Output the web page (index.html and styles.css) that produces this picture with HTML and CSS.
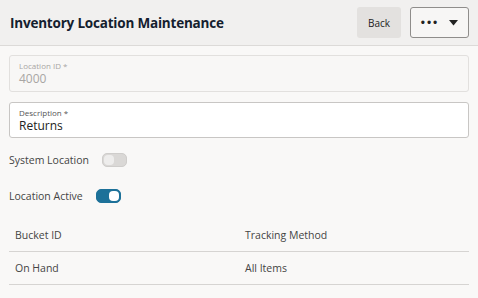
FILE: index.html
```html
<!DOCTYPE html>
<html lang="en">
<head>
  <meta charset="UTF-8">
  <title>Inventory Location Maintenance</title>
  <link rel="stylesheet" href="styles.css">
</head>
<body>
  <header class="topbar">
    <h1>Inventory Location Maintenance</h1>
    <div class="actions">
      <button class="btn-back">Back</button>
      <button class="btn-more">
        <span class="dots">&bull;&bull;&bull;</span>
        <svg width="9" height="6" viewBox="0 0 9 6"><path d="M0 0h9L4.5 5.5z" fill="#222"/></svg>
      </button>
    </div>
  </header>

  <main class="content">
    <div class="field disabled">
      <label>Location ID *</label>
      <div class="value">4000</div>
    </div>
    <div class="field">
      <label>Description *</label>
      <div class="value">Returns</div>
    </div>

    <div class="switches">
      <div class="switch-row">
        <span>System Location</span>
        <span class="switch"></span>
      </div>
      <div class="switch-row">
        <span>Location Active</span>
        <span class="switch on"></span>
      </div>
    </div>

    <table class="buckets">
      <thead>
        <tr><th>Bucket ID</th><th>Tracking Method</th></tr>
      </thead>
      <tbody>
        <tr><td>On Hand</td><td>All Items</td></tr>
      </tbody>
    </table>
  </main>
</body>
</html>
```

FILE: styles.css
```css
body {
  margin: 0;
  font-family: 'Open Sans', sans-serif;
  background: #f9f8f7;
  color: #333;
}

.topbar {
  height: 45px;
  display: flex;
  align-items: center;
  justify-content: space-between;
  padding: 0 9px 0 10px;
  background: #f1f0ef;
  border-bottom: 1px solid #dcdad8;
}

.topbar h1 {
  margin: 0;
  font-size: 13.5px;
  letter-spacing: -0.2px;
  font-weight: 700;
  color: #14202e;
}

.actions {
  display: flex;
  gap: 9px;
}

.btn-back {
  width: 44px;
  height: 31px;
  border: none;
  border-radius: 3px;
  background: #e3e1df;
  font-family: inherit;
  font-size: 10px;
  color: #222;
}

.btn-more {
  width: 59px;
  height: 31px;
  display: flex;
  align-items: center;
  justify-content: center;
  gap: 10px;
  border: 1px solid #8f8d8b;
  border-radius: 3px;
  background: #f7f6f5;
  padding: 0;
}

.dots {
  font-size: 12px;
  letter-spacing: 2px;
  color: #222;
}

.content {
  padding: 9px 9px 0 9px;
}

.field {
  height: 36px;
  padding: 5px 9px 0;
  box-sizing: border-box;
  border: 1px solid #c8c6c4;
  border-radius: 3px;
  background: #fff;
  margin-bottom: 10px;
}

.field.disabled {
  height: 37px;
  background: #f8f7f6;
  border-color: #e2e0de;
}

.field label {
  display: block;
  font-size: 8px;
  line-height: 10px;
  color: #555;
}

.field .value {
  font-size: 12px;
  line-height: 16px;
  color: #222;
}

.field.disabled label,
.field.disabled .value {
  color: #a8a6a4;
}

.switches {
  margin-top: -6px;
}

.switch-row {
  display: flex;
  align-items: center;
  gap: 13px;
  height: 36px;
  font-size: 10.5px;
  color: #444;
}

.switch {
  position: relative;
  width: 25px;
  height: 14px;
  border-radius: 5px;
  background: #dad8d6;
  border: 1px solid #cfcdcb;
  box-sizing: border-box;
}

.switch::after {
  content: "";
  position: absolute;
  left: 1px;
  top: 1px;
  width: 10px;
  height: 10px;
  border-radius: 4px;
  background: #eeedec;
}

.switch.on {
  background: #1d7199;
  border-color: #1d7199;
}

.switch.on::after {
  left: auto;
  right: 1px;
  background: #fff;
}

.buckets {
  width: 100%;
  margin-top: 5px;
  border-collapse: collapse;
  font-size: 10.5px;
  color: #444;
}

.buckets th,
.buckets td {
  text-align: left;
  font-weight: 400;
  padding: 0 6px;
  height: 32px;
  border-bottom: 1px solid #d6d4d2;
}

.buckets th:first-child,
.buckets td:first-child {
  width: 218px;
}
```
